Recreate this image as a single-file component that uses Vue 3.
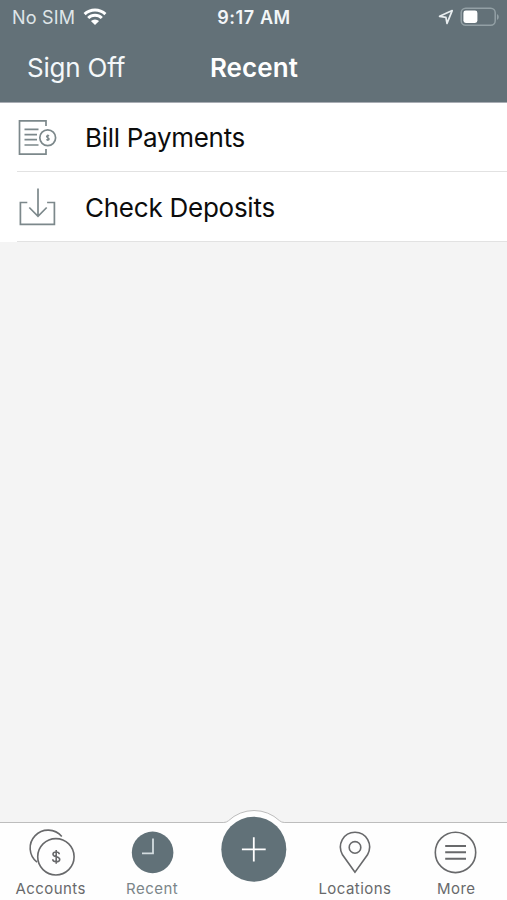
<template>
  <div class="app-page">
    <header class="header">
      <div class="status-bar">
        <div class="status-left">
          <span class="carrier">No SIM</span>
          <svg class="wifi" width="24" height="18" viewBox="0 0 24 18">
            <path d="M1.6 6.2a15 15 0 0 1 20.8 0" />
            <path d="M5.2 10a9.8 9.8 0 0 1 13.6 0" />
            <path class="dot" d="M7.9 13a6 6 0 0 1 8.2 0L12 17.1z" />
          </svg>
        </div>
        <span class="time">9:17 AM</span>
        <div class="status-right">
          <svg class="arrow" width="16" height="16" viewBox="0 0 16 16">
            <path d="M1.6 7.3 14.2 1.6 9 14.4 7.9 8.3z" />
          </svg>
          <svg width="39" height="20" viewBox="0 0 39 20">
            <rect class="battery" x="1.2" y="1.2" width="34" height="17" rx="4.5" />
            <rect x="3.4" y="3.6" width="14" height="12.4" rx="2.4" fill="#fff" />
            <path d="M37 7v6a3.4 3.4 0 0 0 0-6z" fill="#93a0a5" />
          </svg>
        </div>
      </div>
      <nav class="nav-bar">
        <span class="sign-off">Sign Off</span>
        <h1 class="title">Recent</h1>
        <span></span>
      </nav>
    </header>

    <ul class="list">
      <li>
        <svg class="row-icon" width="40" height="38" viewBox="0 0 40 38">
          <path d="M29 7V1.8H2.5v33.4H29V30" />
          <path d="M7.5 10.4h14M7.5 15.6h12.5M7.5 20.7h12.5M7.5 26h14" />
          <circle cx="30.7" cy="18.8" r="7.9" />
          <path d="M32 17.1c-.6-1-2.5-.8-2.5.4 0 1.6 2.7 1 2.7 2.6 0 1.3-2.2 1.4-2.8.3M30.8 15.4V22" stroke-width="1.2" />
        </svg>
        <span class="row-label bill">Bill Payments</span>
      </li>
      <li>
        <svg class="row-icon" width="40" height="38" viewBox="0 0 40 38">
          <path d="M10.3 14.5H3.4v21.9h34V14.5h-7.3" />
          <path d="M21 .5v27.7M12.3 19.5l8.7 8.8 8.7-8.8" />
        </svg>
        <span class="row-label check">Check Deposits</span>
      </li>
    </ul>

    <footer class="tab-bar">
      <div v-for="tab in tabs" :key="tab.id" class="tab" :class="tab.id">
        <svg v-if="tab.id === 'accounts'" class="tab-icon" width="48" height="48" viewBox="0 0 48 48">
          <path d="M10 34.2A17.95 17.95 0 1 1 34.8 8.5" />
          <circle cx="28.9" cy="28.8" r="18.2" />
          <path d="M32.3 26.2c-.2-2.9-6.3-2.9-6.3 0 0 3.4 6.7 1.7 6.7 5.2 0 3.3-6.8 3.2-7-.1M29.2 22v13.8" />
        </svg>
        <svg v-else-if="tab.id === 'recent'" class="tab-icon" width="48" height="48" viewBox="0 0 48 48">
          <circle cx="24.6" cy="24.4" r="20.8" fill="#617178" stroke="none" />
          <path d="M25 10.4v15H14" stroke="#d3dcdf" stroke-width="1.8" />
        </svg>
        <svg v-else-if="tab.id === 'add'" class="add-icon" width="78" height="78" viewBox="0 0 78 78">
          <path d="M0 13.5h9.5q3 0 5-1.8a37 37 0 0 1 51 0q2 1.8 5 1.8H78v8H0z" fill="#fefefe" stroke="none" />
          <path d="M0 13.5h9.5q3 0 5-1.8a37 37 0 0 1 51 0q2 1.8 5 1.8H78" stroke="#bdbdbd" stroke-width="1" />
          <circle cx="39.8" cy="40.3" r="32.5" fill="#617178" stroke="none" />
          <path d="M39.8 28.3v24.2M27.9 40.4h23.8" stroke="#fff" stroke-width="1.8" />
        </svg>
        <svg v-else-if="tab.id === 'locations'" class="tab-icon" width="48" height="48" viewBox="0 0 48 48">
          <path d="M24 44.2 11.5 26.8C5.8 16.5 12.5 4.3 24 4.3s18.2 12.2 12.5 22.5z" />
          <circle cx="24" cy="19.4" r="5.8" />
        </svg>
        <svg v-else class="tab-icon" width="48" height="48" viewBox="0 0 48 48">
          <circle cx="23.5" cy="24.4" r="20.2" />
          <path d="M13.2 18h20.8M13.2 24.3h20.8M13.2 30.7h20.8" stroke-width="1.9" />
        </svg>
        <span v-if="tab.label" class="tab-label">{{ tab.label }}</span>
      </div>
    </footer>
  </div>
</template>

<script setup>
const tabs = [
  { id: 'accounts', label: 'Accounts' },
  { id: 'recent', label: 'Recent' },
  { id: 'add', label: '' },
  { id: 'locations', label: 'Locations' },
  { id: 'more', label: 'More' },
]
</script>

<style>
body {
  margin: 0;
}
</style>

<style scoped>
.app-page {
  display: flex;
  flex-direction: column;
  height: 900px;
  overflow: hidden;
  background: #f4f4f4;
  font-family: Inter, 'Liberation Sans', sans-serif;
}

svg {
  display: block;
  flex: none;
  fill: none;
}

.header {
  height: 103px;
  background: #637178;
  border-bottom: 1px solid #a9adb4;
  box-sizing: border-box;
  color: #fff;
}

.status-bar,
.nav-bar {
  display: grid;
  grid-template-columns: 1fr auto 1fr;
  align-items: center;
}

.status-bar {
  height: 34px;
  padding: 0 8px 0 12px;
}

.status-left,
.status-right {
  display: flex;
  align-items: center;
}

.status-right {
  justify-content: flex-end;
  gap: 6px;
}

.carrier {
  width: 71px;
  font-size: 18px;
  letter-spacing: 0.2px;
  color: #dfe5e8;
  white-space: nowrap;
}

.wifi {
  stroke: #fff;
  stroke-width: 3;
}

.wifi .dot {
  fill: #fff;
  stroke: none;
}

.time {
  margin-right: 3px;
  font-size: 18px;
  font-weight: 600;
  letter-spacing: 0.6px;
  color: #f3f6f8;
}

.arrow {
  stroke: #e9eef0;
  stroke-width: 1.7;
  stroke-linejoin: round;
}

.battery {
  stroke: #93a0a5;
  stroke-width: 1.5;
}

.nav-bar {
  height: 67px;
  padding: 0 26px 0 27px;
}

.sign-off {
  font-size: 26px;
  letter-spacing: -0.2px;
  color: #f4f8fa;
}

.title {
  margin: 0;
  font-size: 26px;
  font-weight: 600;
  letter-spacing: 0.1px;
}

.list {
  margin: 0;
  padding: 0;
  list-style: none;
  background: #fff;
}

.list li {
  display: flex;
  align-items: center;
  height: 70px;
  padding-left: 17px;
  box-sizing: border-box;
  background: linear-gradient(#e2e2e2, #e2e2e2) 17px 100% / 100% 1px no-repeat;
}

.list li:first-child {
  height: 69px;
}

.row-icon {
  margin-right: 28px;
  stroke: #7c888b;
  stroke-width: 1.7;
}

.row-label {
  font-size: 26px;
  color: #0c0c0c;
  white-space: nowrap;
}

.row-label.bill {
  letter-spacing: -0.3px;
}

.row-label.check {
  letter-spacing: -0.25px;
}

.tab-bar {
  display: grid;
  grid-template-columns: repeat(5, 1fr);
  height: 78px;
  margin-top: auto;
  box-sizing: border-box;
  border-top: 1px solid #bdbdbd;
  background: #fefefe;
}

.tab {
  display: flex;
  flex-direction: column;
  align-items: center;
  color: #68696b;
}

.tab-icon {
  margin-top: 5px;
  stroke: #68696b;
  stroke-width: 1.6;
}

.add-icon {
  margin-top: -14px;
}

.tab-label {
  margin-top: 2px;
  font-size: 15px;
  line-height: 21px;
  letter-spacing: 0.45px;
}

.recent .tab-label {
  color: #7b8589;
}
</style>
